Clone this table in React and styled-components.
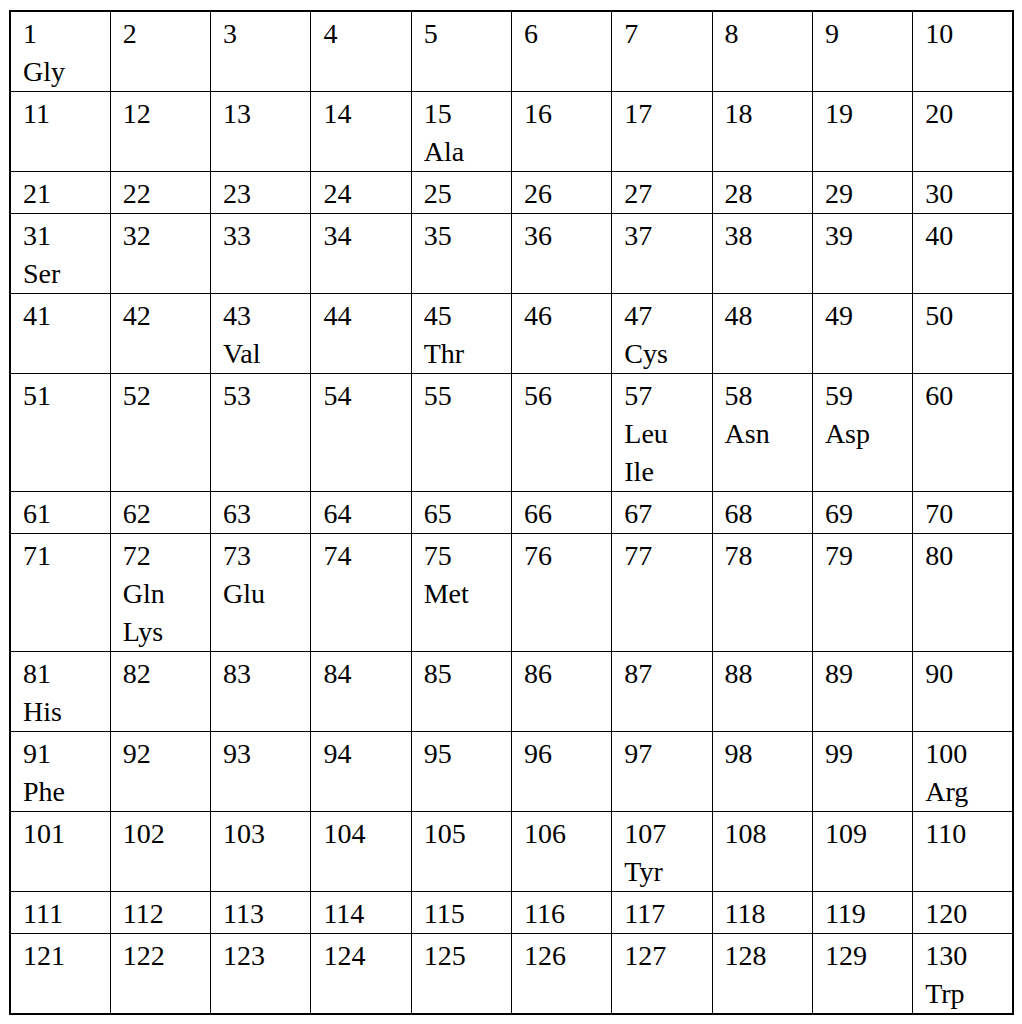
import styled, { createGlobalStyle } from "styled-components";

const GlobalStyle = createGlobalStyle`
  html, body {
    margin: 0;
    padding: 0;
    background: #ffffff;
  }
  body {
    font-family: "Liberation Serif", "Times New Roman", Times, serif;
    color: #000000;
  }
`;

const Page = styled.div`
  padding: 10px 0 0 9px;
`;

const Table = styled.table`
  width: 1005px;
  table-layout: fixed;
  border-collapse: collapse;
  border: 2px solid #000;
  font-family: "Liberation Serif", "Times New Roman", Times, serif;
`;

const Cell = styled.td`
  border: 1px solid #000;
  padding: 3px 4px 0 12px;
  vertical-align: top;
  font-family: "Liberation Serif", "Times New Roman", Times, serif;
  font-size: 28px;
  line-height: 38px;
  color: #000;
`;

const Line = styled.div`
  white-space: nowrap;
`;

// amino acid labels keyed by cell number
const labels = {
  1: ["Gly"],
  15: ["Ala"],
  31: ["Ser"],
  43: ["Val"],
  45: ["Thr"],
  47: ["Cys"],
  57: ["Leu", "Ile"],
  58: ["Asn"],
  59: ["Asp"],
  72: ["Gln", "Lys"],
  73: ["Glu"],
  75: ["Met"],
  81: ["His"],
  91: ["Phe"],
  100: ["Arg"],
  107: ["Tyr"],
  130: ["Trp"],
};

const rows = Array.from({ length: 13 }, (_, r) =>
  Array.from({ length: 10 }, (_, c) => r * 10 + c + 1)
);

const App = () => {
  return (
    <>
      <GlobalStyle />
      <Page>
        <Table>
          <tbody>
            {rows.map((row, i) => (
              <tr key={i}>
                {row.map((n) => (
                  <Cell key={n}>
                    <Line>{n}</Line>
                    {(labels[n] || []).map((name) => (
                      <Line key={name}>{name}</Line>
                    ))}
                  </Cell>
                ))}
              </tr>
            ))}
          </tbody>
        </Table>
      </Page>
    </>
  );
};

export default App;
